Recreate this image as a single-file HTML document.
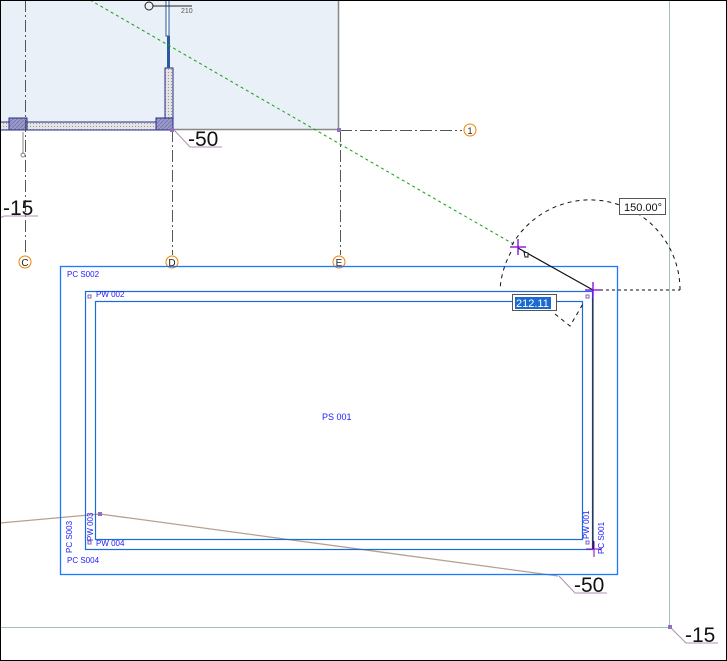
<!DOCTYPE html>
<html><head><meta charset="utf-8"><style>
html,body{margin:0;padding:0;background:#fff}
svg{display:block}
text{font-family:"Liberation Sans",sans-serif}
</style></head><body>
<svg width="727" height="661" viewBox="0 0 727 661" xmlns="http://www.w3.org/2000/svg">
<defs>
<pattern id="st" width="3" height="3" patternUnits="userSpaceOnUse"><rect width="3" height="3" fill="#e4e4e4"/><rect width="1" height="1" fill="#999"/></pattern>
<pattern id="ht" width="4" height="4" patternUnits="userSpaceOnUse"><rect width="4" height="4" fill="#9a9ac8"/><path d="M0 4L4 0" stroke="#7a7ab0" stroke-width="1"/></pattern>
</defs>
<rect x="0" y="0" width="727" height="661" fill="#fff"/>
<rect x="0" y="0" width="338" height="129" fill="#e9f0f7"/>
<path d="M338.5 0V129.5H174" stroke="#888" fill="none" stroke-width="1.5"/>
<rect x="0" y="122" width="172" height="8" fill="url(#st)" stroke="#2a2a8a" stroke-width="1"/>
<rect x="165" y="68" width="8" height="54" fill="url(#st)" stroke="#2a2a8a" stroke-width="1"/>
<rect x="9" y="118" width="18" height="12" fill="url(#ht)" stroke="#2a2a8a"/>
<rect x="156" y="118" width="17" height="12" fill="url(#ht)" stroke="#2a2a8a"/>
<rect x="166" y="0" width="3" height="36" fill="#fff" stroke="#2a5a9a"/>
<rect x="167" y="36" width="3" height="32" fill="#2a5a9a"/>
<circle cx="149" cy="6" r="4" fill="none" stroke="#222"/>
<line x1="153" y1="6" x2="192" y2="6" stroke="#222"/>
<text x="181" y="13" font-size="7" fill="#555">210</text>
<g stroke="#555" stroke-width="1" stroke-dasharray="12,3,2,3" fill="none">
<line x1="25.5" y1="0" x2="25.5" y2="255"/>
<line x1="172.5" y1="130" x2="172.5" y2="255"/>
<line x1="340.5" y1="130" x2="340.5" y2="255"/>
<line x1="340" y1="130.5" x2="462" y2="130.5"/>
</g>
<line x1="23" y1="132" x2="23" y2="154" stroke="#888"/>
<circle cx="23" cy="155" r="2" fill="none" stroke="#888"/>
<g fill="none" stroke="#f08000" stroke-width="1">
<circle cx="25" cy="262" r="6"/><circle cx="172" cy="262" r="6"/><circle cx="339" cy="262" r="6"/><circle cx="470" cy="130" r="6"/>
</g>
<g font-size="10" fill="#222" text-anchor="middle">
<text x="25" y="266">C</text><text x="172" y="266">D</text><text x="339" y="266">E</text><text x="470" y="134" font-size="9">1</text>
</g>
<path d="M174 130L190 147H222" stroke="#b090b0" fill="none"/>
<text x="188" y="146" font-size="21" fill="#111">-50</text>
<path d="M0 218L4 216H38" stroke="#b090b0" fill="none"/>
<text x="3" y="215" font-size="21" fill="#111">-15</text>
<rect x="337" y="128" width="4" height="4" fill="#9070c0"/>
<rect x="170" y="128" width="4" height="4" fill="#9070c0"/>
<line x1="90" y1="0" x2="515" y2="245" stroke="#10a010" stroke-dasharray="3,3"/>
<line x1="669.5" y1="0" x2="669.5" y2="627" stroke="#9cc4bc"/>
<line x1="0" y1="627.5" x2="669" y2="627.5" stroke="#9cc4bc"/>
<path d="M670 627L686 643H718" stroke="#b090b0" fill="none"/>
<text x="685" y="642" font-size="21" fill="#111">-15</text>
<rect x="668" y="625" width="4" height="4" fill="#9070c0"/>
<polyline points="0,523 100,514 558,576" stroke="#b8a090" fill="none" stroke-width="1.3"/>
<rect x="98" y="512" width="4" height="4" fill="#9070c0"/>
<path d="M559 576L575 593H607" stroke="#b090b0" fill="none"/>
<text x="574" y="592" font-size="21" fill="#111">-50</text>
<rect x="60.5" y="266.5" width="557" height="308" fill="none" stroke="#1a7aff" stroke-width="1.3"/>
<rect x="85.5" y="291.5" width="507" height="258" fill="none" stroke="#1a6ad8" stroke-width="1.2"/>
<line x1="593" y1="292" x2="593" y2="549" stroke="#111"/>
<rect x="95.5" y="301.5" width="487" height="238" fill="none" stroke="#1a6ad8" stroke-width="1.2"/>
<rect x="88" y="295" width="3" height="3" fill="none" stroke="#8060c0"/>
<rect x="88" y="541" width="3" height="3" fill="none" stroke="#8060c0"/>
<rect x="586" y="295" width="3" height="3" fill="none" stroke="#8060c0"/>
<rect x="586" y="541" width="3" height="3" fill="none" stroke="#8060c0"/>
<g font-size="8" fill="#2020ff">
<text x="67" y="277">PC S002</text>
<text x="96" y="297">PW 002</text>
<text x="322" y="420" font-size="9">PS 001</text>
<text x="96" y="546">PW 004</text>
<text x="67" y="563">PC S004</text>
<text transform="translate(72,553) rotate(-90)">PC S003</text>
<text transform="translate(93,541) rotate(-90)">PW 003</text>
<text transform="translate(589,539) rotate(-90)">PW 001</text>
<text transform="translate(604,554) rotate(-90)">PC S001</text>
</g>
<line x1="594" y1="541" x2="594" y2="557" stroke="#8000c0"/>
<line x1="586" y1="549" x2="602" y2="549" stroke="#8000c0"/>
<path d="M680 290 A90 90 0 0 0 512 245" fill="none" stroke="#111" stroke-dasharray="4,4"/>
<path d="M511 252 A90 90 0 0 0 500 290" fill="none" stroke="#111" stroke-dasharray="4,4"/>
<path d="M555 314 L570 326 L584 302" fill="none" stroke="#111" stroke-dasharray="4,4"/>
<line x1="594" y1="290" x2="680" y2="290" stroke="#111" stroke-dasharray="3,3"/>
<line x1="518" y1="248" x2="593" y2="290" stroke="#111" stroke-width="1.2"/>
<line x1="518" y1="239" x2="518" y2="255" stroke="#8000e0" stroke-width="1.3"/>
<line x1="510" y1="247" x2="526" y2="247" stroke="#8000e0" stroke-width="1.3"/>
<line x1="593" y1="282" x2="593" y2="298" stroke="#8000e0" stroke-width="1.3"/>
<line x1="585" y1="290" x2="601" y2="290" stroke="#8000e0" stroke-width="1.3"/>
<path d="M524 252 l4 1 0 4 -3 0z" fill="#fff" stroke="#111"/>
<rect x="619.5" y="198.5" width="46" height="16" fill="#fff" stroke="#555"/>
<text x="624" y="211" font-size="11" fill="#111">150.00°</text>
<rect x="512.5" y="294.5" width="44" height="16" fill="#fff" stroke="#555"/>
<rect x="515" y="297" width="36" height="12" fill="#1a6ad0"/>
<text x="516" y="307" font-size="11" fill="#fff">212.11</text>
<rect x="0.5" y="0.5" width="726" height="660" fill="none" stroke="#000"/>
</svg>
</body></html>
